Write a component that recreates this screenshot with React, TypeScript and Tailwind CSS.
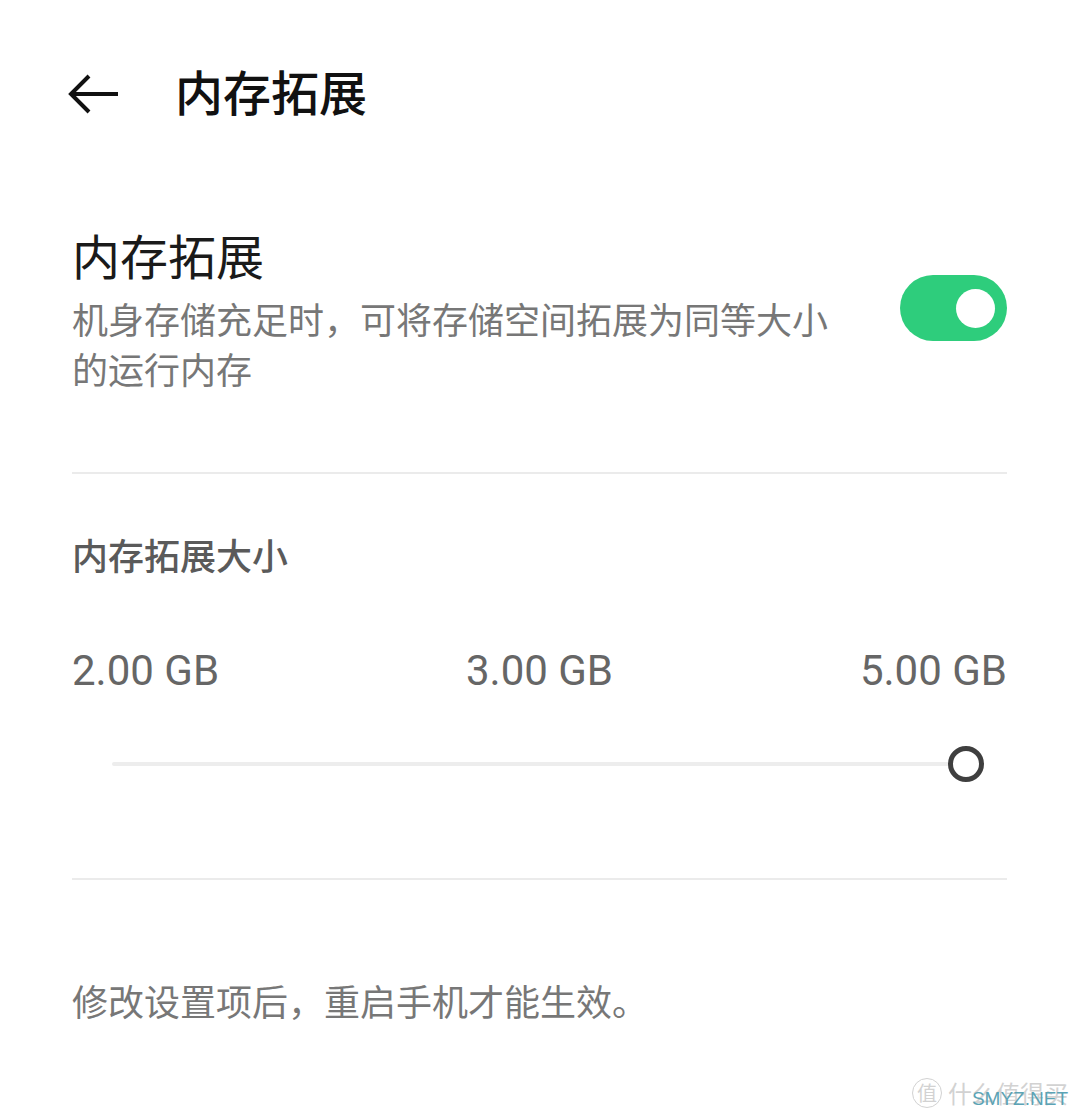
import React from 'react';

const cjk = "font-['Noto_Sans_CJK_SC','Noto_Sans',sans-serif] [text-spacing-trim:space-all]";

function BackArrow() {
  return (
    <svg width="52" height="42" viewBox="0 0 52 42" fill="none">
      <path d="M50 21H4" stroke="#111" strokeWidth="4" />
      <path d="M21 3L3 21l18 18" stroke="#111" strokeWidth="4" strokeLinejoin="miter" />
    </svg>
  );
}

function Toggle() {
  return (
    <div className="w-[107px] h-[66px] rounded-full bg-[#2ecd7c] flex items-center justify-end pr-[12px]">
      <div className="w-[39px] h-[39px] rounded-full bg-white" />
    </div>
  );
}

function Slider() {
  return (
    <div className="mt-[48px] h-[40px] ml-[40px] mr-[23px] flex items-center">
      <div className="flex-1 h-[4px] bg-[#ededed] rounded-full -mr-[18px]" />
      <div className="w-[36px] h-[36px] rounded-full border-[5px] border-[#3f3f3f] bg-white relative" />
    </div>
  );
}

export default function App() {
  return (
    <div className={`relative w-[1080px] h-[1116px] bg-white overflow-hidden ${cjk}`}>
      <div className="flex items-center h-[188px] pl-[68px]">
        <BackArrow />
        <div className="ml-[55px] mb-[8px] text-[48px] leading-[56px] font-medium text-[#111]">内存拓展</div>
      </div>

      <div className="pl-[72px] pr-[73px]">
        <div className="flex items-start justify-between pt-[38px]">
          <div className="w-[770px]">
            <div className="text-[48px] leading-[56px] text-[#1a1a1a]">内存拓展</div>
            <div className="mt-[11px] text-[36px] leading-[50px] text-[#777]">
              机身存储充足时，可将存储空间拓展为同等大小的运行内存
            </div>
          </div>
          <div className="mt-[49px]">
            <Toggle />
          </div>
        </div>

        <div className="mt-[79px] border-t-2 border-[#ebebeb]" />

        <div className="mt-[55px] text-[36px] leading-[50px] font-medium text-[#5a5a5a]">内存拓展大小</div>

        <div className="mt-[67px] flex justify-between font-['Roboto',sans-serif] text-[42px] leading-[50px] text-[#666]">
          <span>2.00 GB</span>
          <span>3.00 GB</span>
          <span>5.00 GB</span>
        </div>

        <Slider />

        <div className="mt-[94px] border-t-2 border-[#ebebeb]" />

        <div className="mt-[95px] text-[36px] leading-[50px] text-[#777]">修改设置项后，重启手机才能生效。</div>
      </div>

      <div className="absolute right-[12px] bottom-[8px] flex items-center gap-[6px] text-[#d2d2d2]">
        <div className="w-[30px] h-[30px] rounded-full border border-[#d2d2d2] flex items-center justify-center text-[20px] leading-none">值</div>
        <span className="text-[24px] leading-none">什么值得买</span>
      </div>
      <span className="absolute right-[12px] bottom-[6px] font-['Liberation_Sans',sans-serif] text-[19px] leading-[22px] text-[#5ba3b5]">SMYZ.NET</span>
    </div>
  );
}
